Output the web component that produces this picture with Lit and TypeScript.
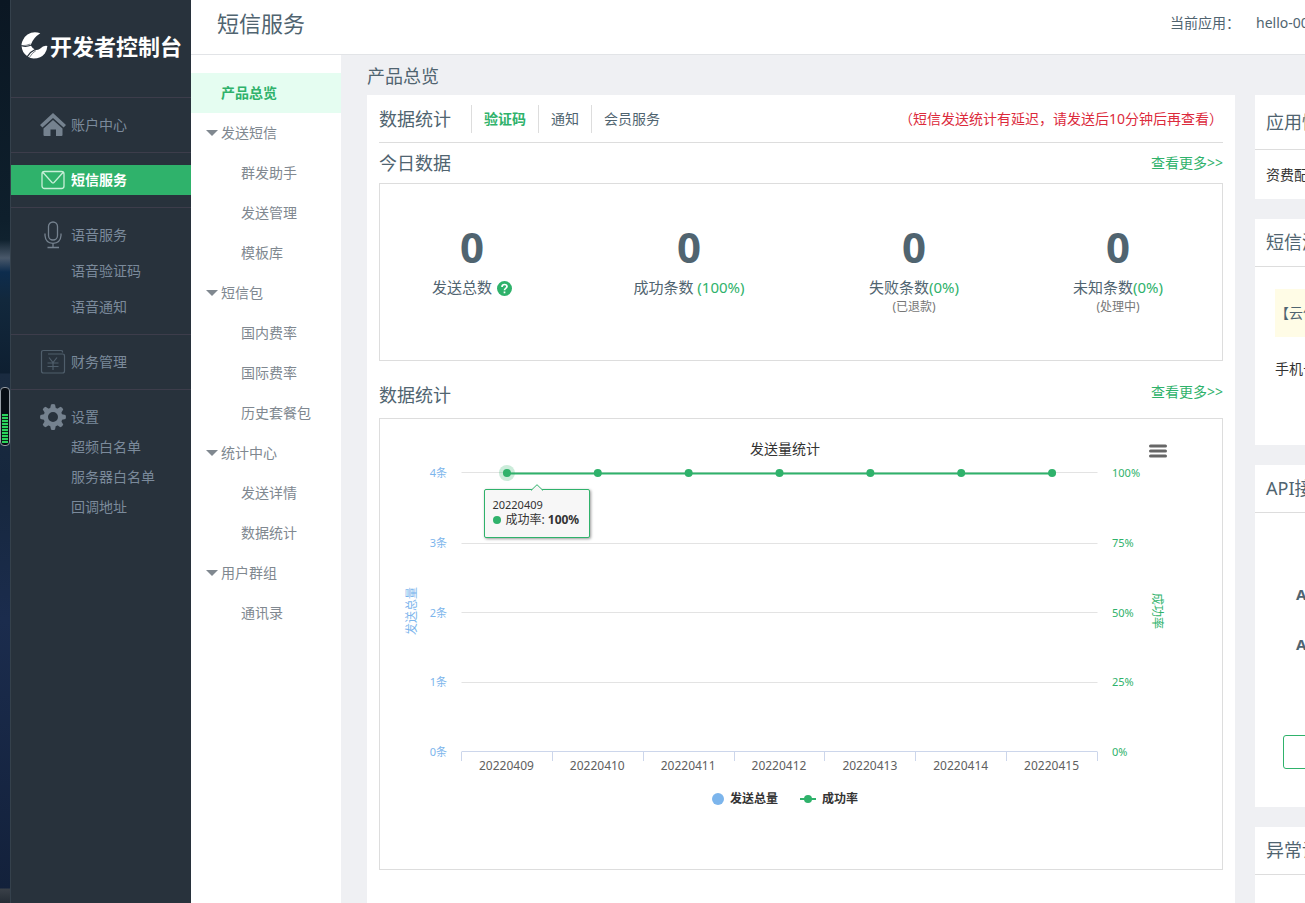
import { LitElement, html, svg, css, nothing } from "lit";
import { customElement, state } from "lit/decorators.js";
import { classMap } from "lit/directives/class-map.js";

const base = css`
  :host {
    display: block;
    font-family: "Noto Sans", "Noto Sans CJK SC", sans-serif;
    font-size: 14px;
    line-height: 20px;
    color: #506470;
  }
  * {
    box-sizing: border-box;
  }
  a {
    color: inherit;
    text-decoration: none;
  }
  button {
    font: inherit;
    color: inherit;
    background: none;
    border: 0;
    padding: 0;
    cursor: pointer;
  }
  h1,
  h2,
  h3,
  p,
  ul {
    margin: 0;
    padding: 0;
    font-weight: inherit;
    list-style: none;
  }
`;

const icons = {
  home: svg`<path fill="#75828f" d="M13 0 L26 12 L23.6 14.6 L13 5 L2.4 14.6 L0 12 Z M13 7 L22.5 15.5 V22 Q22.5 23 21.5 23 H16 V16.5 H10.5 V23 H4.500 Q3.500 23 3.500 22 V15.500 Z"/>`,
  mail: svg`<g fill="none" stroke="#c8efd8" stroke-width="1.300"><rect x="2" y="3.500" width="22" height="17" rx="2.500"/><path d="M3 4.500 L12 14.500 Q13 15.300 14 14.500 L23 4.500"/></g>`,
  mic: svg`<g fill="none" stroke="#75828f" stroke-width="1.300"><rect x="8.500" y="-1" width="9" height="18" rx="4.500"/><path d="M5 10.500 V12.500 Q5.500 20 13 20.300 Q20.500 20 21 12.500 V10.500 M13 20.500 V24.500 M7.500 24.500 H19"/></g>`,
  yen: svg`<g fill="none" stroke="#4f5e6b" stroke-width="1.200"><path d="M22.500 2.500 V1.500 Q22.500 .5 21 .5 H3.500 Q1.500 .5 1.500 2.500 V21 Q1.500 23 3.500 23 H22.500 Q24.500 23 24.500 21 V6 Q24.500 4 22.500 4 H8"/><path d="M9 7.500 L13 12.500 L17 7.500 M13 12.500 V20 M7.500 13 H18.500 M7.500 16.500 H18.500"/></g>`,
  gear: svg`<g fill="#75828f"><path fill-rule="evenodd" d="M13 2.500 A9.500 9.500 0 1 0 13 21.500 A9.500 9.500 0 1 0 13 2.500 Z M13 7 A5 5 0 1 1 13 17 A5 5 0 1 1 13 7 Z"/>${[0, 45, 90, 135, 180, 225, 270, 315].map(
    (a) => svg`<path d="M11 -.5 Q13 -1.500 15 -.5 L16 4 H10 Z" transform="rotate(${a} 13 12)"/>`
  )}</g>`,
};

type IconName = keyof typeof icons;

interface Section {
  icon: IconName;
  label: string;
  active?: boolean;
  roomy?: boolean;
  children?: string[];
}

const sections: Section[] = [
  { icon: "home", label: "账户中心" },
  { icon: "mail", label: "短信服务", active: true },
  { icon: "mic", label: "语音服务", roomy: true, children: ["语音验证码", "语音通知"] },
  { icon: "yen", label: "财务管理" },
  { icon: "gear", label: "设置", children: ["超频白名单", "服务器白名单", "回调地址"] },
];

@customElement("console-sidebar")
export class ConsoleSidebar extends LitElement {
  static styles = [
    base,
    css`
      :host {
        background: #28323c;
        border-left: 1px solid #35414c;
        color: #7b8a9b;
      }
      .logo {
        display: flex;
        align-items: center;
        height: 97px;
        padding: 0 0 6px 10px;
        gap: 2px;
        color: #fff;
        font-size: 22px;
        line-height: 28px;
        font-weight: 700;
        white-space: nowrap;
      }
      .mark {
        width: 27px;
        height: 27px;
        flex: none;
      }
      .section {
        border-top: 1px solid #3d3d4b;
        padding: 12px 0;
      }
      .row {
        display: flex;
        align-items: center;
        gap: 3px;
        height: 30px;
        padding-left: 27px;
      }
      .icon {
        width: 30px;
        height: 26px;
        overflow: visible;
      }
      .child {
        display: block;
        line-height: 30px;
        padding-left: 60px;
      }
      .roomy {
        padding: 9px 0;
      }
      .roomy .row {
        height: 36px;
      }
      .roomy .child {
        line-height: 36px;
      }
      .active {
        background: #2fb26b;
        color: #fff;
        font-weight: 700;
      }
    `,
  ];

  render() {
    return html`
      <a class="logo" href="#">
        <svg class="mark" viewBox="0 0 27 27" aria-hidden="true">
          <path
            fill="#fff"
            d="M19.300 1.300 Q12.500 -1.300 6.500 2.500 Q3.500 4.500 2 8 Q.2 11 .6 13.200 Q4.500 14.800 9.800 12.800 Q12 6 19.300 1.300 Z M.6 14.300 Q1 20.500 6 24 Q8.500 19.500 13.500 17.300 Q11.500 16.500 10 13.800 Q5 15.800 .6 14.300 Z M7 24.800 Q9.500 26.500 12.500 26.600 Q20 26.500 23.800 21.500 Q26 18.500 26.400 14 Q22.500 13.200 19 16.700 Q17 18.200 14.500 18 Q9.500 20.300 7 24.800 Z"
          />
          <path d="M1 13.600 Q5 13.800 9.500 12 M8.500 25.300 Q11 21 15 18.500" stroke="#28323c" stroke-width=".6" fill="none" />
        </svg>
        <span>开发者控制台</span>
      </a>
      <nav>
        ${sections.map(
          (s) => html`
            <div class=${classMap({ section: true, roomy: !!s.roomy })}>
              <a class=${classMap({ row: true, active: !!s.active })} href="#">
                <svg class="icon" viewBox="-2 -1 30 26" aria-hidden="true">${icons[s.icon]}</svg>
                <span>${s.label}</span>
              </a>
              ${s.children?.map((c) => html`<a class="child" href="#">${c}</a>`) ?? nothing}
            </div>
          `
        )}
      </nav>
    `;
  }
}

const menu = [
  { label: "发送短信", children: ["群发助手", "发送管理", "模板库"] },
  { label: "短信包", children: ["国内费率", "国际费率", "历史套餐包"] },
  { label: "统计中心", children: ["发送详情", "数据统计"] },
  { label: "用户群组", children: ["通讯录"] },
];

@customElement("service-menu")
export class ServiceMenu extends LitElement {
  static styles = [
    base,
    css`
      :host {
        background: #fff;
        color: #808890;
        padding-top: 18px;
        line-height: 40px;
      }
      a,
      button {
        display: flex;
        align-items: center;
        width: 100%;
        height: 40px;
      }
      .current {
        padding-left: 30px;
        background: #e5fdf1;
        color: #2fb26b;
        font-weight: 700;
      }
      .group {
        padding-left: 15px;
        gap: 3px;
      }
      .arrow {
        width: 12px;
        height: 6px;
      }
      .leaf {
        padding-left: 50px;
      }
    `,
  ];

  render() {
    return html`
      <nav>
        <a class="current" href="#">产品总览</a>
        ${menu.map(
          (g) => html`
            <button class="group" type="button">
              <svg class="arrow" viewBox="0 0 12 6" aria-hidden="true">
                <path d="M0 0 H12 L6 6 Z" fill="#808890" />
              </svg>
              ${g.label}
            </button>
            ${g.children.map((c) => html`<a class="leaf" href="#">${c}</a>`)}
          `
        )}
      </nav>
    `;
  }
}

const dates = ["20220409", "20220410", "20220411", "20220412", "20220413", "20220414", "20220415"];
const gridY = [8, 79, 148, 218];
const baseline = 287;
const at = (i: number) => `${((i + 0.5) / dates.length) * 100}%`;

@customElement("send-chart")
export class SendChart extends LitElement {
  static styles = [
    base,
    css`
      :host {
        padding: 19px 32px 62px 0;
        color: #333;
      }
      .head {
        display: grid;
        grid-template-columns: 1fr auto 1fr;
        align-items: center;
        height: 20px;
        margin-bottom: 6px;
        padding: 0 23px;
      }
      .title {
        grid-column: 2;
        font-size: 14px;
        line-height: 20px;
      }
      .menu {
        justify-self: end;
        height: 16px;
        margin-top: 5px;
      }
      .menu svg {
        display: block;
      }
      .body {
        display: grid;
        grid-template-columns: 24px 37px 1fr 48px 24px;
        padding: 0 21px 0 20px;
        font-size: 11px;
        line-height: 16px;
      }
      .name {
        align-self: center;
        justify-self: center;
        writing-mode: vertical-rl;
        text-orientation: sideways;
        font-size: 12px;
      }
      .flip {
        transform: rotate(180deg);
      }
      .blue {
        color: #7cb5ec;
      }
      .green {
        color: #2fb26b;
      }
      .scale {
        display: flex;
        flex-direction: column;
        justify-content: space-between;
        height: 296px;
        margin-bottom: -2px;
        padding: 1px 14px 0 15px;
        white-space: nowrap;
      }
      .left {
        align-items: flex-end;
      }
      .plot {
        position: relative;
        height: 294px;
      }
      .lines {
        display: block;
        width: 100%;
        height: 294px;
        overflow: visible;
      }
      .dates {
        grid-column: 3;
        display: grid;
        grid-template-columns: repeat(7, 1fr);
        text-align: center;
        font-size: 12px;
        color: #606060;
      }
      .tip {
        position: absolute;
        top: 25px;
        left: calc(100% / 14 - 22px);
        padding: 7px 10px 10px 7px;
        border: 1px solid #2fb26b;
        border-radius: 2px;
        background: #f7f7f7;
        box-shadow: 1px 1px 3px rgba(0, 0, 0, 0.4);
        font-size: 12px;
        white-space: nowrap;
      }
      .tip svg {
        position: absolute;
        left: 46px;
        top: -6px;
      }
      .tip p {
        line-height: 15px;
      }
      .day {
        font-size: 11px;
      }
      .row {
        display: flex;
        align-items: center;
        gap: 4px;
      }
      .dot {
        width: 8px;
        height: 8px;
        margin-left: 1px;
        border-radius: 50%;
        background: #2fb26b;
      }
      .legend {
        display: flex;
        justify-content: center;
        gap: 22px;
        margin-top: 17px;
        font-size: 12px;
        line-height: 16px;
      }
      .legend button {
        display: flex;
        align-items: center;
        font-weight: 700;
        gap: 6px;
      }
    `,
  ];

  render() {
    return html`
      <div class="head">
        <h3 class="title">发送量统计</h3>
        <button class="menu" type="button" aria-label="图表菜单">
          <svg width="18" height="16" viewBox="0 0 18 16">
            <path d="M1.500 3 H16.500 M1.500 8 H16.500 M1.500 13 H16.500" stroke="#666" stroke-width="3" stroke-linecap="round" />
          </svg>
        </button>
      </div>
      <div class="body">
        <span class="name flip blue">发送总量</span>
        <div class="scale left blue">
          ${[4, 3, 2, 1, 0].map((n) => html`<span>${n}条</span>`)}
        </div>
        <div class="plot">
          <svg class="lines" role="img" aria-label="成功率">
            <g transform="translate(0.5 0.5)">
              ${gridY.map((y) => svg`<line x1="0" x2="100%" y1=${y} y2=${y} stroke="#e3e3e3"/>`)}
              <line x1="0" x2="100%" y1=${baseline} y2=${baseline} stroke="#ccd6eb" />
              ${[...dates, ""].map((_, i) => {
                const x = `${(i / dates.length) * 100}%`;
                return svg`<line x1=${x} x2=${x} y1=${baseline} y2=${baseline + 9} stroke="#ccd6eb" shape-rendering="crispEdges"/>`;
              })}
              <line x1=${at(0)} x2=${at(6)} y1="9" y2="9" stroke="#2fb26b" stroke-width="2" />
              <circle cx=${at(0)} cy="8.500" r="8" fill="#2fb26b" fill-opacity=".25" />
              ${dates.map((_, i) => svg`<circle cx=${at(i)} cy="8.500" r="4" fill="#2fb26b"/>`)}
            </g>
          </svg>
          <div class="tip">
            <svg width="12" height="7" viewBox="0 0 12 7" aria-hidden="true">
              <path d="M0 6.500 L6 .7 L12 6.500" fill="#f7f7f7" stroke="#2fb26b" />
              <path d="M1 7 H11" stroke="#f7f7f7" />
            </svg>
            <p class="day">20220409</p>
            <p class="row"><span class="dot"></span><span>成功率: <b>100%</b></span></p>
          </div>
        </div>
        <div class="scale green">
          ${[100, 75, 50, 25, 0].map((n) => html`<span>${n}%</span>`)}
        </div>
        <span class="name green">成功率</span>
        <div class="dates">${dates.map((d) => html`<span>${d}</span>`)}</div>
      </div>
      <div class="legend">
        <button type="button">
          <svg width="12" height="12" aria-hidden="true"><circle cx="6" cy="6" r="6" fill="#7cb5ec" /></svg>
          发送总量
        </button>
        <button type="button">
          <svg width="16" height="10" aria-hidden="true">
            <path d="M0 5 H16" stroke="#2fb26b" stroke-width="2" />
            <circle cx="8" cy="5" r="4" fill="#2fb26b" />
          </svg>
          成功率
        </button>
      </div>
    `;
  }
}

@customElement("app-root")
export class AppRoot extends LitElement {
  @state() private tab = "验证码";

  static styles = [
    base,
    css`
      :host {
        min-height: 100vh;
        height: 100vh;
        display: flex;
        overflow: hidden;
        background: #eff0f3;
      }
      .desktop {
        position: relative;
        flex: 0 0 10px;
        background: linear-gradient(
          #0b1723 0,
          #0e1f2c 220px,
          #10222f 240px,
          #49586a 258px,
          #0d2c4d 272px,
          #12283c 300px,
          #0e1f31 373px,
          #1a2b40 374px,
          #16273d 480px,
          #1b2c4d 620px,
          #13213b 888px,
          #3a4048 889px,
          #252c35 100%
        );
      }
      .meter {
        position: absolute;
        left: 0;
        top: 387px;
        width: 10px;
        height: 59px;
        padding: 26px 1px 2px;
        border: 1px solid #969da5;
        border-radius: 4px;
        background: #070d14;
      }
      .level {
        height: 100%;
        background: repeating-linear-gradient(#2bd45c 0 2px, #0a2a18 2px 3px);
      }
      console-sidebar {
        flex: 0 0 181px;
      }
      .page {
        flex: 1;
        min-width: 0;
        display: flex;
        flex-direction: column;
      }
      .top {
        flex: none;
        display: flex;
        align-items: center;
        height: 55px;
        padding: 0 0 8px 26px;
        background: #fff;
        border-bottom: 1px solid #e2e4e7;
      }
      .top h1 {
        flex: 1;
        font-size: 22px;
        line-height: 30px;
      }
      .app {
        flex: 0 0 49px;
        margin-left: 16px;
        overflow: hidden;
        white-space: nowrap;
      }
      .below {
        flex: 1;
        min-height: 0;
        display: flex;
      }
      service-menu {
        flex: 0 0 150px;
      }
      main {
        flex: 1;
        min-width: 0;
        padding-left: 26px;
      }
      h2 {
        font-size: 18px;
        line-height: 26px;
      }
      .crumb {
        padding: 8px 0 6px;
      }
      .columns {
        display: flex;
        gap: 20px;
        align-items: flex-start;
      }
      .card {
        background: #fff;
      }
      .overview {
        flex: 1;
        min-width: 0;
        padding: 0 12px 60px;
      }
      .tabs {
        display: flex;
        align-items: center;
        height: 48px;
        border-bottom: 1px solid #ddd;
      }
      .tabs h2 {
        margin-right: 20px;
      }
      .tabs button {
        height: 28px;
        padding: 0 12px;
        border-left: 1px solid #ddd;
      }
      .tabs .on {
        color: #2fb26b;
        font-weight: 700;
      }
      .note {
        margin-left: auto;
        color: #dc2a3c;
      }
      .head {
        display: flex;
        align-items: center;
        justify-content: space-between;
        height: 40px;
      }
      .lower {
        align-items: flex-start;
        height: 57px;
        padding-top: 21px;
        line-height: 20px;
      }
      .lower h2 {
        line-height: 26px;
      }
      .more {
        color: #2fb26b;
      }
      .box {
        border: 1px solid #ddd;
      }
      .stats {
        display: grid;
        grid-template-columns: 184fr 250fr 200fr 208fr;
        min-height: 178px;
        padding-top: 38px;
        text-align: center;
        font-size: 15px;
        line-height: 24px;
      }
      .stats b {
        display: block;
        padding-bottom: 3px;
        font-size: 42px;
        line-height: 50px;
      }
      .stats small {
        display: block;
        font-size: 12px;
        line-height: 16px;
        color: #777;
      }
      .stats em {
        font-style: normal;
        color: #2fb26b;
      }
      .help {
        width: 15px;
        height: 15px;
        margin-left: 5px;
        vertical-align: -3px;
      }
      .side {
        flex: 0 0 50px;
        display: flex;
        flex-direction: column;
        gap: 20px;
        overflow: hidden;
        white-space: nowrap;
      }
      .side h2 {
        padding: 10px 0 11px 11px;
        border-bottom: 1px solid #ddd;
      }
      .side .tall {
        padding: 14px 0 14px 11px;
      }
      .fee {
        padding: 15px 11px 14px;
        color: #333;
      }
      .trial {
        padding: 22px 0 66px 20px;
      }
      .sample {
        padding: 14px 0;
        background: #fffce6;
      }
      .phone {
        display: block;
        margin-top: 22px;
        color: #333;
      }
      .api {
        padding: 56px 0 38px 28px;
        font-weight: 700;
        font-size: 15px;
        line-height: 50px;
      }
      .api p {
        padding-left: 13px;
      }
      .api button {
        display: block;
        width: 120px;
        height: 34px;
        margin-top: 66px;
        border: 1px solid #2fb26b;
        border-radius: 3px;
      }
      .blank {
        height: 60px;
      }
      h1,
      h2 {
        font-weight: 400;
      }
    `,
  ];

  private stat(label: string, rate: unknown, note = "") {
    return html`<div><b>0</b>${label}${rate}${note ? html`<small>${note}</small>` : nothing}</div>`;
  }

  render() {
    return html`
      <div class="desktop"><div class="meter"><div class="level"></div></div></div>
      <console-sidebar></console-sidebar>
      <div class="page">
        <header class="top">
          <h1>短信服务</h1>
          <span>当前应用：</span>
          <span class="app">hello-00</span>
        </header>
        <div class="below">
          <service-menu></service-menu>
          <main>
            <h2 class="crumb">产品总览</h2>
            <div class="columns">
              <section class="card overview">
                <div class="tabs">
                  <h2>数据统计</h2>
                  ${["验证码", "通知", "会员服务"].map(
                    (t) => html`<button
                      type="button"
                      class=${classMap({ on: t === this.tab })}
                      @click=${() => (this.tab = t)}
                    >${t}</button>`
                  )}
                  <span class="note">（短信发送统计有延迟，请发送后10分钟后再查看）</span>
                </div>
                <div class="head"><h2>今日数据</h2><a class="more" href="#">查看更多&gt;&gt;</a></div>
                <div class="box stats">
                  ${this.stat(
                    "发送总数",
                    html`<svg class="help" viewBox="0 0 15 15" aria-hidden="true">
                      <circle cx="7.500" cy="7.500" r="7.500" fill="#2fb26b" />
                      <path d="M5 6 Q5 3.500 7.500 3.500 Q10 3.500 10 5.600 Q10 6.600 8.700 7.400 Q7.500 8.200 7.500 9.300 M7.500 10.600 V12.300" fill="none" stroke="#fff" stroke-width="1.700" />
                    </svg>`
                  )}
                  ${this.stat("成功条数", html` <em>(100%)</em>`)}
                  ${this.stat("失败条数", html`<em>(0%)</em>`, "(已退款)")}
                  ${this.stat("未知条数", html`<em>(0%)</em>`, "(处理中)")}
                </div>
                <div class="head lower"><h2>数据统计</h2><a class="more" href="#">查看更多&gt;&gt;</a></div>
                <send-chart class="box"></send-chart>
              </section>
              <aside class="side">
                <section class="card">
                  <h2 class="tall">应用情况</h2>
                  <p class="fee">资费配置</p>
                </section>
                <section class="card">
                  <h2>短信测试</h2>
                  <div class="trial">
                    <p class="sample">【云信】</p>
                    <span class="phone">手机号</span>
                  </div>
                </section>
                <section class="card">
                  <h2>API接口</h2>
                  <div class="api">
                    <p>App</p>
                    <p>App</p>
                    <button type="button" aria-label="API接口"></button>
                  </div>
                </section>
                <section class="card">
                  <h2>异常设置</h2>
                  <div class="blank"></div>
                </section>
              </aside>
            </div>
          </main>
        </div>
      </div>
    `;
  }
}
